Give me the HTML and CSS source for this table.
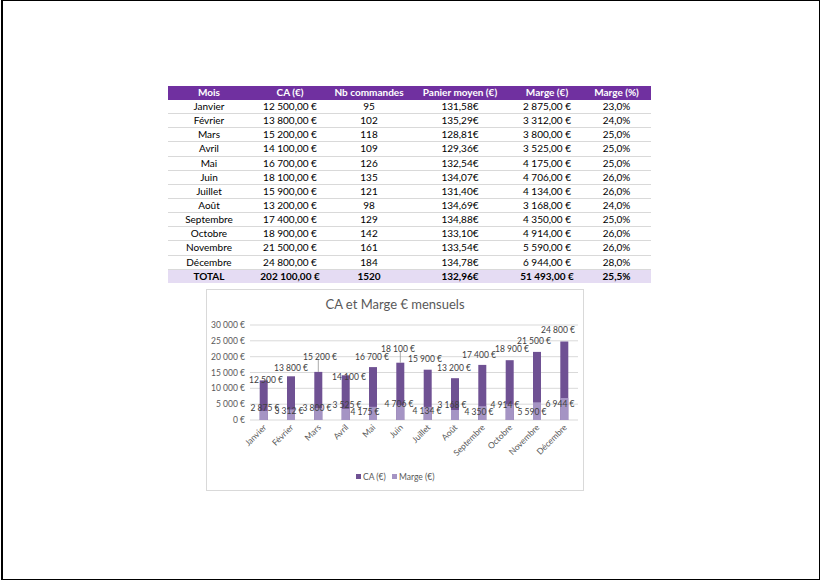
FILE: index.html
```html
<!DOCTYPE html>
<html lang="fr">
<head>
<meta charset="utf-8">
<title>CA et Marge</title>
<link rel="stylesheet" href="styles.css">
</head>
<body>
<div class="page">
  <table class="data">
    <colgroup>
      <col class="c1"><col class="c2"><col class="c3"><col class="c4"><col class="c5"><col class="c6">
    </colgroup>
    <thead>
      <tr><th>Mois</th><th>CA (€)</th><th>Nb commandes</th><th>Panier moyen (€)</th><th>Marge (€)</th><th>Marge (%)</th></tr>
    </thead>
    <tbody>
      <tr><td>Janvier</td><td>12 500,00 €</td><td>95</td><td>131,58€</td><td>2 875,00 €</td><td>23,0%</td></tr>
      <tr><td>Février</td><td>13 800,00 €</td><td>102</td><td>135,29€</td><td>3 312,00 €</td><td>24,0%</td></tr>
      <tr><td>Mars</td><td>15 200,00 €</td><td>118</td><td>128,81€</td><td>3 800,00 €</td><td>25,0%</td></tr>
      <tr><td>Avril</td><td>14 100,00 €</td><td>109</td><td>129,36€</td><td>3 525,00 €</td><td>25,0%</td></tr>
      <tr><td>Mai</td><td>16 700,00 €</td><td>126</td><td>132,54€</td><td>4 175,00 €</td><td>25,0%</td></tr>
      <tr><td>Juin</td><td>18 100,00 €</td><td>135</td><td>134,07€</td><td>4 706,00 €</td><td>26,0%</td></tr>
      <tr><td>Juillet</td><td>15 900,00 €</td><td>121</td><td>131,40€</td><td>4 134,00 €</td><td>26,0%</td></tr>
      <tr><td>Août</td><td>13 200,00 €</td><td>98</td><td>134,69€</td><td>3 168,00 €</td><td>24,0%</td></tr>
      <tr><td>Septembre</td><td>17 400,00 €</td><td>129</td><td>134,88€</td><td>4 350,00 €</td><td>25,0%</td></tr>
      <tr><td>Octobre</td><td>18 900,00 €</td><td>142</td><td>133,10€</td><td>4 914,00 €</td><td>26,0%</td></tr>
      <tr><td>Novembre</td><td>21 500,00 €</td><td>161</td><td>133,54€</td><td>5 590,00 €</td><td>26,0%</td></tr>
      <tr><td>Décembre</td><td>24 800,00 €</td><td>184</td><td>134,78€</td><td>6 944,00 €</td><td>28,0%</td></tr>
      <tr class="total"><td>TOTAL</td><td>202 100,00 €</td><td>1520</td><td>132,96€</td><td>51 493,00 €</td><td>25,5%</td></tr>
    </tbody>
  </table>

  <div class="chart">
    <svg width="378" height="202" viewBox="0 0 378 202" xmlns="http://www.w3.org/2000/svg">
      <text class="title" x="189" y="19.5" text-anchor="middle">CA et Marge € mensuels</text>
      <g class="grid">
        <line x1="44" x2="372" y1="36" y2="36"/>
        <line x1="44" x2="372" y1="51.8" y2="51.8"/>
        <line x1="44" x2="372" y1="67.7" y2="67.7"/>
        <line x1="44" x2="372" y1="83.5" y2="83.5"/>
        <line x1="44" x2="372" y1="99.3" y2="99.3"/>
        <line x1="44" x2="372" y1="115.2" y2="115.2"/>
        <line x1="44" x2="372" y1="131" y2="131"/>
      </g>
      <g class="ylab" text-anchor="end">
        <text x="39" y="39">30 000 €</text>
        <text x="39" y="54.8">25 000 €</text>
        <text x="39" y="70.7">20 000 €</text>
        <text x="39" y="86.5">15 000 €</text>
        <text x="39" y="102.3">10 000 €</text>
        <text x="39" y="118.2">5 000 €</text>
        <text x="39" y="134">0 €</text>
      </g>
      <g class="ca">
        <rect x="53.7" y="91.4" width="8" height="39.6"/>
        <rect x="81" y="87.3" width="8" height="43.7"/>
        <rect x="108.3" y="82.9" width="8" height="48.1"/>
        <rect x="135.7" y="86.3" width="8" height="44.7"/>
        <rect x="163" y="78.1" width="8" height="52.9"/>
        <rect x="190.3" y="73.7" width="8" height="57.3"/>
        <rect x="217.7" y="80.7" width="8" height="50.3"/>
        <rect x="245" y="89.2" width="8" height="41.8"/>
        <rect x="272.3" y="75.9" width="8" height="55.1"/>
        <rect x="299.7" y="71.2" width="8" height="59.8"/>
        <rect x="327" y="62.9" width="8" height="68.1"/>
        <rect x="354.3" y="52.5" width="8" height="78.5"/>
      </g>
      <g class="marge">
        <rect x="53.7" y="121.9" width="8" height="9.1"/>
        <rect x="81" y="120.5" width="8" height="10.5"/>
        <rect x="108.3" y="119" width="8" height="12"/>
        <rect x="135.7" y="119.8" width="8" height="11.2"/>
        <rect x="163" y="117.8" width="8" height="13.2"/>
        <rect x="190.3" y="116.1" width="8" height="14.9"/>
        <rect x="217.7" y="117.9" width="8" height="13.1"/>
        <rect x="245" y="121" width="8" height="10"/>
        <rect x="272.3" y="117.2" width="8" height="13.8"/>
        <rect x="299.7" y="115.4" width="8" height="15.6"/>
        <rect x="327" y="113.3" width="8" height="17.7"/>
        <rect x="354.3" y="109" width="8" height="22"/>
      </g>
      <g class="leader">
        <line x1="112.3" x2="112.3" y1="71" y2="82.9"/>
        <line x1="194.3" x2="194.3" y1="63" y2="73.7"/>
      </g>
      <g class="dlab" text-anchor="middle">
        <text x="60" y="94">12 500 €</text>
        <text x="85" y="82">13 800 €</text>
        <text x="114" y="71">15 200 €</text>
        <text x="143" y="91">14 100 €</text>
        <text x="166" y="71">16 700 €</text>
        <text x="192" y="63">18 100 €</text>
        <text x="219" y="73">15 900 €</text>
        <text x="248" y="82">13 200 €</text>
        <text x="273" y="69">17 400 €</text>
        <text x="306" y="63">18 900 €</text>
        <text x="328" y="55">21 500 €</text>
        <text x="352" y="44">24 800 €</text>
        <text x="59" y="122">2 875 €</text>
        <text x="83" y="125">3 312 €</text>
        <text x="111" y="122">3 800 €</text>
        <text x="141" y="119">3 525 €</text>
        <text x="159" y="126">4 175 €</text>
        <text x="193" y="118">4 706 €</text>
        <text x="221" y="125">4 134 €</text>
        <text x="246" y="119">3 168 €</text>
        <text x="273" y="126">4 350 €</text>
        <text x="299" y="119">4 914 €</text>
        <text x="326" y="126">5 590 €</text>
        <text x="354" y="118">6 944 €</text>
      </g>
      <g class="xlab" text-anchor="end">
        <text transform="translate(61,139) rotate(-45)">Janvier</text>
        <text transform="translate(88,139) rotate(-45)">Février</text>
        <text transform="translate(115.5,139) rotate(-45)">Mars</text>
        <text transform="translate(143,139) rotate(-45)">Avril</text>
        <text transform="translate(170,139) rotate(-45)">Mai</text>
        <text transform="translate(197.5,139) rotate(-45)">Juin</text>
        <text transform="translate(225,139) rotate(-45)">Juillet</text>
        <text transform="translate(252,139) rotate(-45)">Août</text>
        <text transform="translate(279.5,139) rotate(-45)">Septembre</text>
        <text transform="translate(307,139) rotate(-45)">Octobre</text>
        <text transform="translate(334,139) rotate(-45)">Novembre</text>
        <text transform="translate(361.5,139) rotate(-45)">Décembre</text>
      </g>
      <g class="legend">
        <rect class="sw-ca" x="150" y="185" width="5" height="5"/>
        <text x="157" y="191">CA (€)</text>
        <rect class="sw-marge" x="186" y="185" width="5" height="5"/>
        <text x="193" y="191">Marge (€)</text>
      </g>
    </svg>
  </div>
</div>
</body>
</html>
```

FILE: styles.css
```css
html, body {
  margin: 0;
  padding: 0;
  background: #fff;
}

.page {
  box-sizing: border-box;
  width: 819px;
  height: 580px;
  margin-left: 1px;
  border: 1px solid #000;
  border-left-width: 2px;
  padding-top: 85px;
  font-family: Lato, "Liberation Sans", sans-serif;
  color: #000;
}

.data {
  border-collapse: collapse;
  margin-left: 165px;
  width: 483px;
  table-layout: fixed;
  font-size: 10px;
}

.c1 { width: 82px; }
.c2 { width: 80px; }
.c3 { width: 78px; }
.c4 { width: 104px; }
.c5 { width: 70px; }
.c6 { width: 69px; }

.data th {
  background: #7030a0;
  color: #fff;
  font-weight: bold;
  height: 13.5px;
  padding: 0;
  text-align: center;
  line-height: 13px;
}

.data td {
  height: 14.15px;
  padding: 0;
  text-align: center;
  line-height: 13px;
  border-bottom: 1px solid #d9d9d9;
  box-sizing: border-box;
}

.data tr.total td {
  background: #e5dcf3;
  font-weight: bold;
  border-bottom: none;
}

.chart {
  margin-top: 6px;
  margin-left: 203px;
  width: 378px;
  height: 202px;
  box-sizing: border-box;
  border: 1px solid #d9d9d9;
  overflow: hidden;
}

.chart svg {
  display: block;
  margin: -1px;
  font-family: Lato, "Liberation Sans", sans-serif;
}

.title {
  font-size: 13px;
  fill: #595959;
}

.grid line {
  stroke: #d9d9d9;
  stroke-width: 1;
}

.ylab text,
.xlab text,
.legend text {
  font-size: 8.5px;
  fill: #595959;
}

.dlab text {
  font-size: 8.5px;
  fill: #404040;
}

.ca rect,
.sw-ca {
  fill: #6f5193;
}

.marge rect,
.sw-marge {
  fill: #a594c4;
}

.leader line {
  stroke: #8c8c8c;
  stroke-width: 0.75;
}
```
